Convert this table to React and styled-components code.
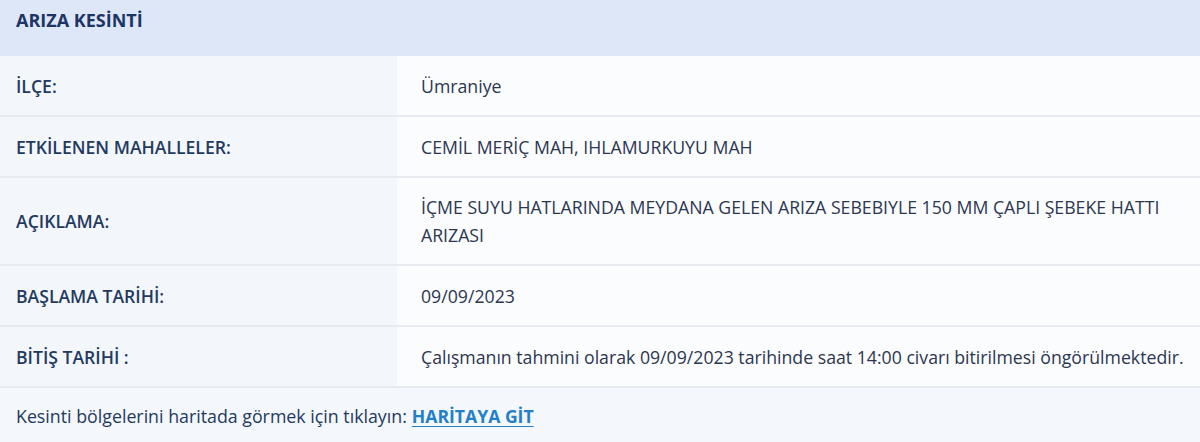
import React from "react";
import styled, { createGlobalStyle } from "styled-components";

const GlobalStyle = createGlobalStyle`
  html, body {
    margin: 0;
    padding: 0;
    background: #f4f7fb;
  }
`;

const Panel = styled.div`
  width: 1200px;
  font-family: "Open Sans", "Noto Sans", sans-serif;
  background: #f4f7fb;
`;

const Header = styled.div`
  height: 56px;
  box-sizing: border-box;
  padding: 8px 16px 0;
  background: #dee7f7;
  color: #1d3564;
  font-size: 18px;
  font-weight: 700;
  line-height: 24px;
`;

const Row = styled.div`
  display: grid;
  grid-template-columns: 397px 1fr;
  min-height: ${(p) => (p.$tall ? 88 : 61)}px;
  border-bottom: 2px solid #e7ebf1;
  box-sizing: border-box;
`;

const Label = styled.div`
  display: flex;
  align-items: center;
  padding: 0 16px;
  background: #f3f6fb;
  color: #233a60;
  font-size: 17.6px;
  font-weight: 600;
`;

const Value = styled.div`
  display: flex;
  align-items: center;
  padding: 0 14px 0 24px;
  background: #fbfcfe;
  color: #2c3650;
  font-size: 17.7px;
  line-height: 28px;
`;

const Footer = styled.div`
  height: 55px;
  display: flex;
  align-items: center;
  padding: 0 16px;
  color: #233a60;
  font-size: 17.8px;
  font-weight: 500;
`;

const MapLink = styled.a`
  margin-left: 5px;
  color: #2380c8;
  font-weight: 700;
  font-size: 17.6px;
  text-decoration: underline;
  text-underline-offset: 3px;
`;

const rows = [
  { label: "İLÇE:", value: "Ümraniye" },
  { label: "ETKİLENEN MAHALLELER:", value: "CEMİL MERİÇ MAH, IHLAMURKUYU MAH" },
  {
    label: "AÇIKLAMA:",
    value: "İÇME SUYU HATLARINDA MEYDANA GELEN ARIZA SEBEBIYLE 150 MM ÇAPLI ŞEBEKE HATTI ARIZASI",
    tall: true,
  },
  { label: "BAŞLAMA TARİHİ:", value: "09/09/2023" },
  {
    label: "BİTİŞ TARİHİ :",
    value: "Çalışmanın tahmini olarak 09/09/2023 tarihinde saat 14:00 civarı bitirilmesi öngörülmektedir.",
  },
];

const App = () => {
  return (
    <>
      <GlobalStyle />
      <Panel>
        <Header>ARIZA KESİNTİ</Header>
        {rows.map((r) => (
          <Row key={r.label} $tall={r.tall}>
            <Label>{r.label}</Label>
            <Value>{r.value}</Value>
          </Row>
        ))}
        <Footer>
          Kesinti bölgelerini haritada görmek için tıklayın:
          <MapLink href="#">HARİTAYA GİT</MapLink>
        </Footer>
      </Panel>
    </>
  );
};

export default App;
